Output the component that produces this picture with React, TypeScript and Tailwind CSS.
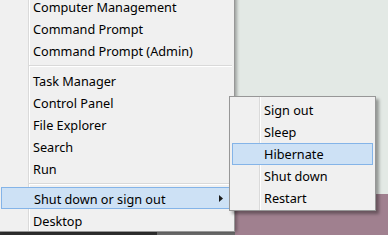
import React from 'react'

const font = { fontFamily: '"Noto Sans", "Open Sans", sans-serif' }

const MenuRow = ({ label, active, arrow }: { label: string; active?: boolean; arrow?: boolean }) => (
  <div
    className={`flex h-[22px] items-center pt-[4px] text-[12.7px] text-black ${
      active ? 'ml-[1px] border border-[#84b4e8] bg-[#cde1f5] pl-[32px]' : 'pl-[33px]'
    }`}
  >
    <span>{label}</span>
    {arrow && (
      <svg className="-mt-[4px] ml-auto mr-[9px]" width="4" height="7" viewBox="0 0 4 7">
        <polygon points="0,0 4,3.5 0,7" fill="#1a1a1a" />
      </svg>
    )}
  </div>
)

const Separator = ({ indent }: { indent: string }) => (
  <div className={`flex h-[8px] flex-col pt-[4px] ${indent}`}>
    <div className="h-[1px] bg-[#d9d9d9]" />
    <div className="h-[1px] bg-white" />
  </div>
)

const SubRow = ({ label, active }: { label: string; active?: boolean }) => (
  <div
    className={`flex h-[22px] items-center pt-[2px] text-[12.7px] text-black ${
      active ? 'border border-[#84b4e8] bg-[#cde1f5] pl-[31px]' : 'pl-[32px]'
    }`}
  >
    {label}
  </div>
)

export default function App() {
  return (
    <div className="relative flex h-[235px] w-[388px] overflow-hidden bg-[#e3e9e5]" style={font}>
      <div className="flex w-[235px] shrink-0 flex-col">
        <div className="z-10 -mt-[5px] flex w-[235px] flex-col border-r border-b border-[#979797] bg-[#f0f0f0] bg-[linear-gradient(to_right,#f0f0f0_28px,#dadada_28px,#dadada_29px,#ffffff_29px,#ffffff_30px,#f0f0f0_30px)] pr-[1px] shadow-[2px_0_3px_rgba(0,0,0,0.3)]">
          <MenuRow label="Computer Management" />
          <MenuRow label="Command Prompt" />
          <MenuRow label="Command Prompt (Admin)" />
          <Separator indent="ml-[29px] mr-[1px]" />
          <MenuRow label="Task Manager" />
          <MenuRow label="Control Panel" />
          <MenuRow label="File Explorer" />
          <MenuRow label="Search" />
          <MenuRow label="Run" />
          <Separator indent="ml-[29px] mr-[1px]" />
          <MenuRow label="Shut down or sign out" active arrow />
          <MenuRow label="Desktop" />
        </div>
        <div className="flex h-[3px]">
          <div className="w-[157px] bg-[#2f2f2f]" />
          <div className="flex-1 bg-[#6b6b6b]" />
        </div>
      </div>

      <div className="flex flex-1 flex-col">
        <div className="h-[194px] bg-[#e3e9e5]" />
        <div className="flex-1 bg-[#a0808f]" />
      </div>

      <div className="absolute left-[229px] top-[96px] z-20 w-[147px] border border-[#979797] bg-[#f0f0f0] bg-[linear-gradient(to_right,#f0f0f0_29px,#dadada_29px,#dadada_30px,#ffffff_30px,#ffffff_31px,#f0f0f0_31px)] px-[2px] pt-[2px] pb-[1px] shadow-[3px_3px_3px_rgba(0,0,0,0.35)]">
        <SubRow label="Sign out" />
        <SubRow label="Sleep" />
        <SubRow label="Hibernate" active />
        <SubRow label="Shut down" />
        <SubRow label="Restart" />
      </div>
    </div>
  )
}
